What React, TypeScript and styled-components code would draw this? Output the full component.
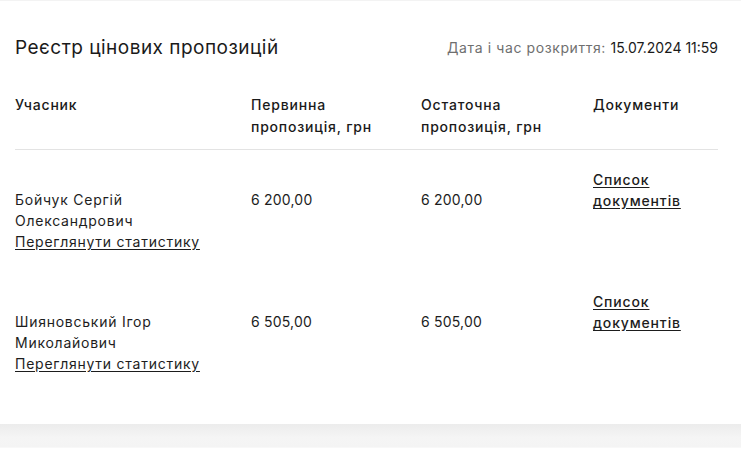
import React from 'react';
import styled, { createGlobalStyle } from 'styled-components';

const GlobalStyle = createGlobalStyle`
	body {
		margin: 0;
		background: #ffffff;
		font-family: Inter, 'Noto Sans', sans-serif;
		color: #1d1d1d;
	}
`;

const columns = '236px 170px 172px 1fr';

const rows = [
	{ name: 'Бойчук Сергій Олександрович', first: '6 200,00', last: '6 200,00' },
	{ name: 'Шияновський Ігор Миколайович', first: '6 505,00', last: '6 505,00' },
];

export default function App() {
	return (
		<>
			<GlobalStyle />
			<Page>
				<Card>
					<Header>
						<Title>Реєстр цінових пропозицій</Title>
						<OpenDate>
							Дата і час розкриття: <strong>15.07.2024 11:59</strong>
						</OpenDate>
					</Header>
					<HeadRow>
						<HeadCell>Учасник</HeadCell>
						<HeadCell>Первинна<br />пропозиція, грн</HeadCell>
						<HeadCell>Остаточна<br />пропозиція, грн</HeadCell>
						<HeadCell>Документи</HeadCell>
					</HeadRow>
					{rows.map(row => (
						<Row key={row.name}>
							<Cell offset>
								<Name>{row.name}</Name>
								<Link href="#">Переглянути статистику</Link>
							</Cell>
							<Amount>{row.first}</Amount>
							<Amount>{row.last}</Amount>
							<Cell>
								<DocLink href="#">Список<br />документів</DocLink>
							</Cell>
						</Row>
					))}
				</Card>
				<Band />
			</Page>
		</>
	);
}

const Page = styled.div`
	border-top: 1px solid #f3f3f3;
`;

const Card = styled.div`
	background: #ffffff;
	padding: 34px 23px 30px 15px;
`;

const Header = styled.div`
	display: flex;
	justify-content: space-between;
	align-items: center;
	margin-bottom: 33px;
`;

const Title = styled.h2`
	margin: 0;
	font-size: 19px;
	font-weight: 400;
	line-height: 26px;
	letter-spacing: 0.48px;
	color: #1a1a1a;
`;

const OpenDate = styled.div`
	font-size: 14px;
	line-height: 20px;
	letter-spacing: 0.6px;
	color: #6f6f6f;

	strong {
		font-weight: 400;
		letter-spacing: 0;
		color: #1a1a1a;
	}
`;

const HeadRow = styled.div`
	display: grid;
	grid-template-columns: ${columns};
	padding-bottom: 11px;
	border-bottom: 1px solid #e3e3e3;
`;

const HeadCell = styled.div`
	font-size: 14px;
	font-weight: 500;
	line-height: 22px;
	letter-spacing: 0.8px;
	color: #1a1a1a;
`;

const Row = styled.div`
	display: grid;
	grid-template-columns: ${columns};
	align-items: start;
	padding: 19px 0 20px;
`;

const Cell = styled.div<{ offset?: boolean }>`
	margin-top: ${props => (props.offset ? '20px' : '0')};
	font-size: 14px;
	line-height: 21px;
	letter-spacing: 0.75px;
	color: #1d1d1d;
`;

const Amount = styled(Cell).attrs({ offset: true })`
	letter-spacing: 0.2px;
`;

const Name = styled.div`
	max-width: 150px;
`;

const Link = styled.a`
	display: block;
	color: #1d1d1d;
	text-decoration: underline;
	text-underline-offset: 2px;
`;

const DocLink = styled(Link)`
	font-weight: 500;
	letter-spacing: 0.85px;
`;

const Band = styled.div`
	height: 23px;
	background: linear-gradient(#ececec, #f5f5f5 60%, #f4f4f4);
	border-bottom: 1px solid #f8f8f8;
`;
